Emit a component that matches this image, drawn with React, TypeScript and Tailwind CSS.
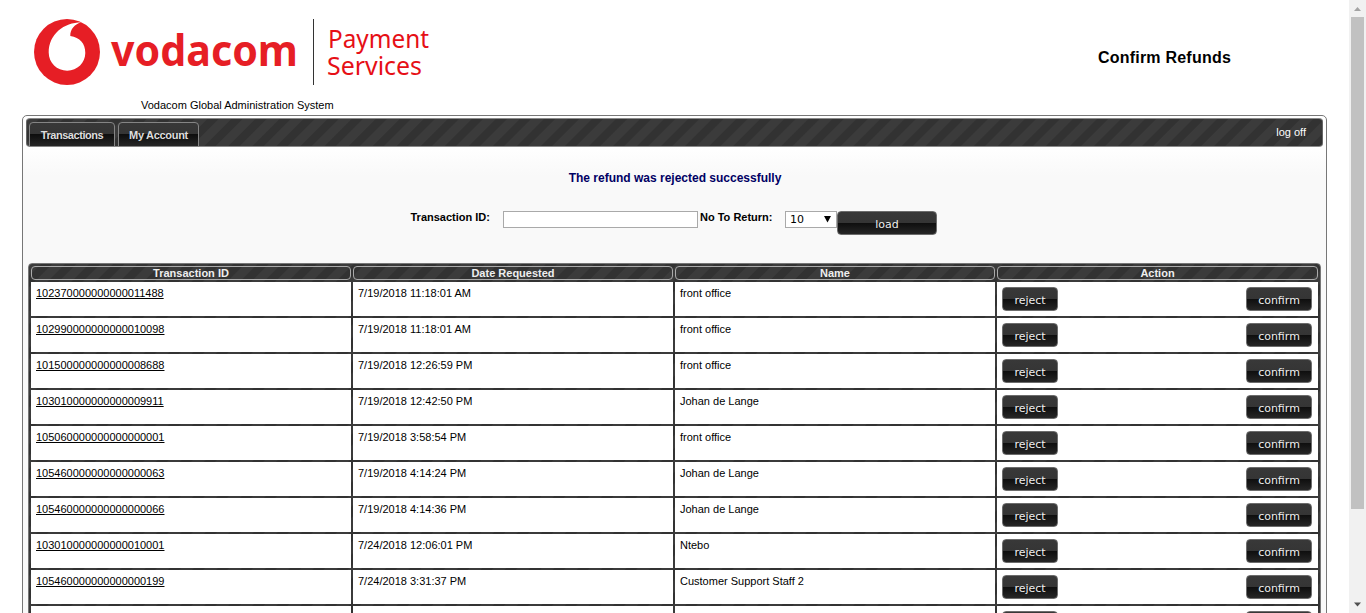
import React from "react";

const rows = [
  ["102370000000000011488", "7/19/2018 11:18:01 AM", "front office"],
  ["102990000000000010098", "7/19/2018 11:18:01 AM", "front office"],
  ["101500000000000008688", "7/19/2018 12:26:59 PM", "front office"],
  ["103010000000000009911", "7/19/2018 12:42:50 PM", "Johan de Lange"],
  ["105060000000000000001", "7/19/2018 3:58:54 PM", "front office"],
  ["105460000000000000063", "7/19/2018 4:14:24 PM", "Johan de Lange"],
  ["105460000000000000066", "7/19/2018 4:14:36 PM", "Johan de Lange"],
  ["103010000000000010001", "7/24/2018 12:06:01 PM", "Ntebo"],
  ["105460000000000000199", "7/24/2018 3:31:37 PM", "Customer Support Staff 2"],
  ["", "", ""],
];

const stripes =
  "bg-[repeating-linear-gradient(135deg,#3b3b3b_0px,#3b3b3b_8px,#323232_9px,#323232_16px,#3b3b3b_17px)]";
const gloss = "bg-[linear-gradient(#383838_0%,#353535_49%,#0e0e0e_50%,#262626_100%)]";
const columns = "grid grid-cols-[320px_320px_320px_321px] gap-x-[2px]";

function Button({ label, className }: { label: string; className: string }) {
  return (
    <button
      className={`${gloss} flex h-6 items-center justify-center rounded-[4px] border border-[#6c6c6c] pt-[3px] font-['DejaVu_Sans',sans-serif] text-[11px] leading-none text-[#eee] ${className}`}
    >
      {label}
    </button>
  );
}

function Logo() {
  return (
    <svg width="420" height="80" viewBox="0 0 420 80" className="block">
      <circle cx="37" cy="42" r="33" fill="#e61e25" />
      <path
        d="M51.300 12.200C34 12.500 18.700 24 18.700 42.500C18.700 53 27 60.700 37.200 60.700C47.500 60.700 55.300 52.500 55.300 43C55.300 33.500 50 27.500 40.300 26C40 19 45 14 51.300 12.200Z"
        fill="#fff"
      />
      <text x="81" y="56" textLength="187" lengthAdjust="spacingAndGlyphs" fill="#e61e25" fontFamily="Noto Sans, sans-serif" fontWeight="700" fontSize="43">
        vodacom
      </text>
      <rect x="283" y="9" width="1" height="66" fill="#333" />
      <text x="298" y="38" textLength="101" lengthAdjust="spacingAndGlyphs" fill="#e60f16" fontFamily="Noto Sans, sans-serif" fontSize="26">
        Payment
      </text>
      <text x="297" y="65" textLength="95" lengthAdjust="spacingAndGlyphs" fill="#e60f16" fontFamily="Noto Sans, sans-serif" fontSize="26">
        Services
      </text>
    </svg>
  );
}

function Tab({ label, className }: { label: string; className: string }) {
  return (
    <div className={`${gloss} h-[25px] rounded-t-[4px] border border-[#858585] pt-[6px] text-center text-[11px] font-bold leading-[13px] text-[#ddd] ${className}`}>
      {label}
    </div>
  );
}

export default function App() {
  return (
    <div className="flex h-[613px] w-[1366px] overflow-hidden bg-white font-['Liberation_Sans',Arial,sans-serif] text-[11px] text-black">
      <div className="h-full w-[1349px] overflow-hidden pl-[22px]">
        <header className="flex h-[115px] justify-between">
          <div className="pl-2 pt-[10px]">
            <Logo />
            <p className="pl-[111px] pt-[9px] leading-[13px]">Vodacom Global Administration System</p>
          </div>
          <h1 className="mr-[118px] pt-[49px] text-[16px] font-bold leading-[18px] tracking-[0.22px]">Confirm Refunds</h1>
        </header>

        <main className="h-[600px] w-[1305px] rounded-t-[5px] border border-[#777] bg-[linear-gradient(#fff_0px,#fff_30px,#f9f9f9_60px)] px-[3px] pt-[2px]">
          <nav className={`${stripes} flex h-[29px] w-[1297px] rounded-[4px] border border-[#8a8a8a] border-l-[#666] border-r-[#666] pl-[2px] pt-[3px]`}>
            <Tab label="Transactions" className="w-[86px] tracking-[-0.45px]" />
            <Tab label="My Account" className="ml-[3px] w-[81px] tracking-[-0.3px]" />
            <span className="ml-auto mr-[16px] mt-[4px] leading-[13px] text-white">log off</span>
          </nav>

          <p className="pl-[1px] pt-[24px] text-center text-[12px] font-bold leading-[14px] text-[#000064]">
            The refund was rejected successfully
          </p>

          <form className="flex pl-[384px] pt-[26px]">
            <label className="w-[93px] pl-[0.500px] text-[11px] font-bold leading-[13px]">Transaction ID:</label>
            <input className="h-[17px] w-[195px] border border-[#a9a9a9] bg-white" />
            <label className="ml-[2px] w-[85px] font-bold leading-[13px]">No To Return:</label>
            <div className="flex h-[17px] w-[52px] items-center justify-between border border-[#a9a9a9] bg-white pl-[4px] pr-[5px] font-['DejaVu_Sans',sans-serif] text-[11px]">
              <span className="pt-[2px]">10</span>
              <svg width="7" height="7" viewBox="0 0 7 7"><path d="M0 0H7L3.500 6.500Z" fill="#000" /></svg>
            </div>
            <Button label="load" className="w-[100px]" />
          </form>

          <section className={`${stripes} ml-[2px] mt-[28px] w-[1293px] rounded-t-[4px] border border-[#777] pl-[2px] pr-[1px] pt-[2px]`}>
            <div className={`${columns} mb-[2px]`}>
              {["Transaction ID", "Date Requested", "Name", "Action"].map((h) => (
                <div key={h} className="h-[14px] rounded-[4px] border border-[#aaa] text-center font-bold leading-[12px] text-[#eee]">
                  {h}
                </div>
              ))}
            </div>
            {rows.map((r, i) => (
              <div key={i} className={`${columns} mb-[2px] h-[34px]`}>
                <div className="bg-white pl-[5px] pt-[5px] leading-[13px]"><a className="underline">{r[0]}</a></div>
                <div className="bg-white pl-[5px] pt-[5px] leading-[13px]">{r[1]}</div>
                <div className="bg-white pl-[5px] pt-[5px] leading-[13px]">{r[2]}</div>
                <div className="flex justify-between bg-white pl-[5px] pr-[6px] pt-[5px]">
                  <Button label="reject" className="w-[56px]" />
                  <Button label="confirm" className="w-[66px]" />
                </div>
              </div>
            ))}
          </section>
        </main>
      </div>

      <aside className="flex h-full w-[17px] flex-col items-center justify-between bg-[#f1f1f1]">
        <div className="flex flex-col items-center">
          <svg width="17" height="17"><path d="M5 11L8.500 7L12 11Z" fill="#a3a3a3" /></svg>
          <div className="h-[492px] w-[13px] bg-[#c1c1c1]" />
        </div>
        <svg width="17" height="17"><path d="M5 6.500L8.500 10.500L12 6.500Z" fill="#505050" /></svg>
      </aside>
    </div>
  );
}
